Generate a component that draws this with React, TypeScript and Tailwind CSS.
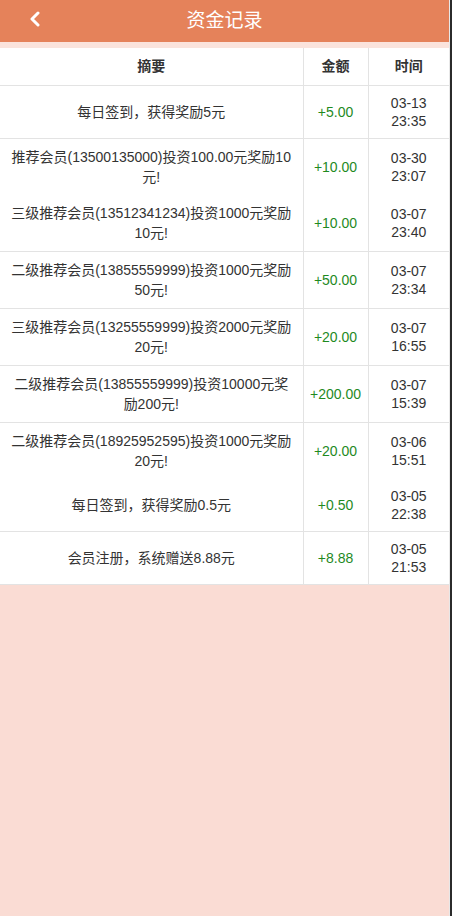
import React from 'react';

interface Record {
  summary: string;
  amount: string;
  date: string;
  time: string;
  noBorder?: boolean;
}

const records: Record[] = [
  { summary: '每日签到，获得奖励5元', amount: '+5.00', date: '03-13', time: '23:35' },
  { summary: '推荐会员(13500135000)投资100.00元奖励10元!', amount: '+10.00', date: '03-30', time: '23:07', noBorder: true },
  { summary: '三级推荐会员(13512341234)投资1000元奖励10元!', amount: '+10.00', date: '03-07', time: '23:40' },
  { summary: '二级推荐会员(13855559999)投资1000元奖励50元!', amount: '+50.00', date: '03-07', time: '23:34' },
  { summary: '三级推荐会员(13255559999)投资2000元奖励20元!', amount: '+20.00', date: '03-07', time: '16:55' },
  { summary: '二级推荐会员(13855559999)投资10000元奖励200元!', amount: '+200.00', date: '03-07', time: '15:39' },
  { summary: '二级推荐会员(18925952595)投资1000元奖励20元!', amount: '+20.00', date: '03-06', time: '15:51', noBorder: true },
  { summary: '每日签到，获得奖励0.5元', amount: '+0.50', date: '03-05', time: '22:38' },
  { summary: '会员注册，系统赠送8.88元', amount: '+8.88', date: '03-05', time: '21:53' },
];

export default function App() {
  return (
    <div
      className="flex min-h-screen bg-[#fadcd4]"
      style={{ fontFamily: '"Liberation Sans", "Noto Sans CJK SC", sans-serif' }}
    >
      <div className="w-[449px] shrink-0">
        {/* Top bar */}
        <div className="relative flex h-[42px] items-center justify-center bg-[#e5825a]">
          <button className="absolute left-[28px] top-[10px] flex h-[18px] w-[14px] items-center justify-center">
            <svg width="12" height="16" viewBox="0 0 12 16" fill="none">
              <polyline
                points="9,2 3,8 9,14"
                stroke="#fff"
                strokeWidth="3"
                strokeLinecap="round"
                strokeLinejoin="round"
              />
            </svg>
          </button>
          <h1 className="text-[19px] font-normal text-white">资金记录</h1>
        </div>
        <div className="h-[6px] bg-[#fbe3dc]" />

        {/* Records */}
        <table className="w-full table-fixed border-collapse bg-white text-[14px] text-[#333]">
          <colgroup>
            <col className="w-[303px]" />
            <col className="w-[65px]" />
            <col />
          </colgroup>
          <thead>
            <tr className="border-b border-[#e3e3e3]">
              <th className="py-[10px] text-center font-bold leading-[17px]">摘要</th>
              <th className="border-l border-[#e3e3e3] py-[10px] text-center font-bold leading-[17px]">金额</th>
              <th className="border-l border-[#e3e3e3] py-[10px] text-center font-bold leading-[17px]">时间</th>
            </tr>
          </thead>
          <tbody>
            {records.map((r, i) => (
              <tr key={i} className={r.noBorder ? '' : 'border-b border-[#e3e3e3]'}>
                <td className="px-[8px] py-[8px] text-center leading-[20px]">{r.summary}</td>
                <td className="border-l border-[#e3e3e3] px-[4px] py-[8px] text-center leading-[20px] text-[#1f8a1f]">
                  {r.amount}
                </td>
                <td className="border-l border-[#e3e3e3] px-[4px] py-[8px] text-center leading-[18px]">
                  {r.date}
                  <br />
                  {r.time}
                </td>
              </tr>
            ))}
          </tbody>
        </table>
      </div>
      <div className="w-px shrink-0 bg-[#e8e8e8]" />
      <div className="flex-1 bg-[#2b2b2b]" />
    </div>
  );
}
